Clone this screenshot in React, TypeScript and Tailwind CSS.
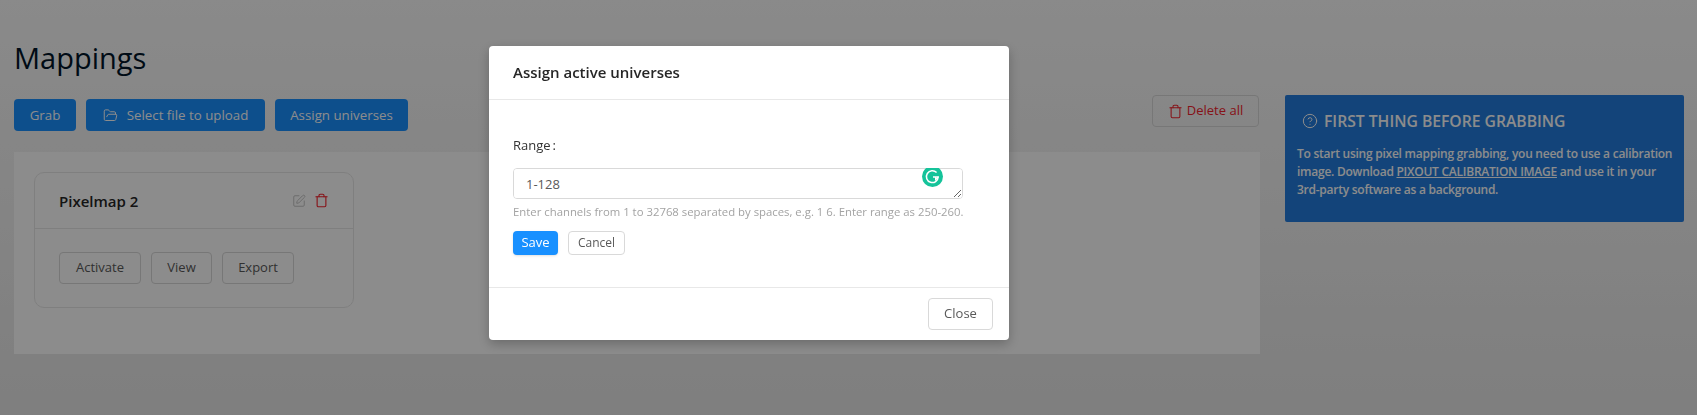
import { FolderOpen, Trash, SquarePen, CircleHelp } from 'lucide-react';

const font = 'font-["Open_Sans","Noto_Sans",sans-serif]';

function GrammarlyBadge() {
  return (
    <div className="absolute top-0 right-[20px] h-[19px] w-[21px] overflow-hidden">
      <svg width="21" height="21" viewBox="0 0 21 21" className="-mt-[2px]">
        <circle cx="10.5" cy="10.5" r="10.5" fill="#15c39a" />
        <path d="M14.6 6.6A5.9 5.9 0 1 0 16.2 11H11" fill="none" stroke="#fff" strokeWidth="1.5" />
        <path d="M16.2 11l-2.6 2.6V11" fill="none" stroke="#fff" strokeWidth="1.2" />
      </svg>
    </div>
  );
}

function AssignModal() {
  return (
    <div className="fixed inset-0 bg-black/45 pt-[46px] pl-[489px]">
      <div className="w-[520px] h-[294px] flex flex-col rounded-[4px] bg-white text-[#262626] shadow-[0_4px_12px_rgba(0,0,0,0.25)]">
        <div className="h-[54px] shrink-0 border-b border-[#e8e8e8] pl-[24px] pt-[14px] text-[15px] leading-[24px] font-semibold text-[#262626]">
          Assign active universes
        </div>
        <div className="flex-1 pl-[24px] pr-[46px]">
          <div className="mt-[35px] text-[13px] leading-[20px] text-[#333]">
            Range<span className="ml-[2px]">:</span>
          </div>
          <div className="relative mt-[13px] h-[31px] w-[450px]">
            <textarea
              defaultValue="1-128"
              className="block h-[31px] min-h-[31px] w-full resize-y rounded-[4px] border border-[#d9d9d9] bg-white px-[12px] py-[4px] text-[13px] leading-[22px] text-[#595959] outline-none"
            />
            <GrammarlyBadge />
          </div>
          <div className="mt-[4px] text-[11.35px] leading-[18px] whitespace-nowrap text-[#a3a3a3]">
            Enter channels from 1 to 32768 separated by spaces, e.g. 1 6. Enter range as 250-260.
          </div>
          <div className="mt-[10px] flex gap-[10px]">
            <button className="h-[24px] w-[45px] rounded-[4px] bg-[#1890ff] text-[13px] text-white shadow-sm">Save</button>
            <button className="h-[24px] w-[57px] rounded-[4px] border border-[#d9d9d9] bg-white text-[12px] text-[#595959]">Cancel</button>
          </div>
        </div>
        <div className="flex h-[53px] shrink-0 justify-end border-t border-[#e8e8e8] pt-[10px] pr-[16px]">
          <button className="h-[32px] w-[65px] rounded-[4px] border border-[#d9d9d9] bg-white text-[13px] text-[#595959]">Close</button>
        </div>
      </div>
    </div>
  );
}

function PixelmapCard() {
  return (
    <div className="h-[136px] w-[320px] rounded-[10px] border border-[#e8e8e8]">
      <div className="flex h-[56px] items-center justify-between border-b border-[#e8e8e8] pl-[24px] pr-[24px]">
        <span className="mt-[1px] text-[15px] font-semibold text-[#262626]">Pixelmap 2</span>
        <div className="flex items-center gap-[8px]">
          <SquarePen className="h-[14px] w-[14px] text-[#bfbfbf]" strokeWidth={1.6} />
          <Trash className="h-[15px] w-[15px] text-[#f5222d]" strokeWidth={1.8} />
        </div>
      </div>
      <div className="flex gap-[10px] pl-[24px] pt-[23px]">
        <button className="h-[32px] w-[82px] rounded-[4px] border border-[#d9d9d9] text-[13px] text-[#595959]">Activate</button>
        <button className="h-[32px] w-[61px] rounded-[4px] border border-[#d9d9d9] text-[13px] text-[#595959]">View</button>
        <button className="h-[32px] w-[72px] rounded-[4px] border border-[#d9d9d9] text-[13px] text-[#595959]">Export</button>
      </div>
    </div>
  );
}

export default function App() {
  return (
    <div className={`${font} relative h-[415px] w-[1697px] overflow-hidden bg-linear-to-b from-[#fbfbfb] to-[#e7e7e7]`}>
      <div className="flex pl-[14px] pt-[38px]">
        <div className="w-[1246px]">
          <h1 className="h-[40px] text-[29px] leading-[40px] font-normal text-[#001529]">Mappings</h1>
          <div className="mt-[21px] flex items-start justify-between">
            <div className="flex gap-[10px]">
              <button className="h-[32px] w-[62px] rounded-[4px] bg-[#1890ff] pt-[1px] text-[13.3px] text-white">Grab</button>
              <button className="flex h-[32px] w-[179px] items-center justify-center gap-[9px] rounded-[4px] bg-[#1890ff] pt-[1px] text-[13.3px] text-white">
                <FolderOpen className="h-[15px] w-[15px]" strokeWidth={1.6} />
                Select file to upload
              </button>
              <button className="h-[32px] w-[133px] rounded-[4px] bg-[#1890ff] pt-[1px] text-[13.3px] text-white">Assign universes</button>
            </div>
            <button className="-mt-[4px] mr-[1px] flex h-[32px] w-[107px] items-center justify-center gap-[4px] rounded-[4px] border border-[#d9d9d9] text-[13px] text-[#f5222d]">
              <Trash className="h-[15px] w-[15px]" strokeWidth={1.7} />
              Delete all
            </button>
          </div>
          <div className="mt-[21px] h-[202px] bg-white pl-[20px] pt-[20px]">
            <PixelmapCard />
          </div>
        </div>
        <div className="ml-[25px] mt-[57px] h-[127px] w-[399px] rounded-[2px] bg-[#247dde] pl-[12px] pr-[6px] pt-[16px] text-white">
          <div className="flex items-center gap-[6px] pl-[5px] text-[15.7px] leading-[20px] font-semibold">
            <CircleHelp className="h-[16px] w-[16px]" strokeWidth={1.5} />
            FIRST THING BEFORE GRABBING
          </div>
          <p className="mt-[14px] text-[12px] leading-[18px] font-semibold tracking-[-0.25px]">
            To start using pixel mapping grabbing, you need to use a calibration image. Download{' '}
            <span className="underline">PIXOUT CALIBRATION IMAGE</span> and use it in your 3rd-party software as a background.
          </p>
        </div>
      </div>
      <AssignModal />
    </div>
  );
}
